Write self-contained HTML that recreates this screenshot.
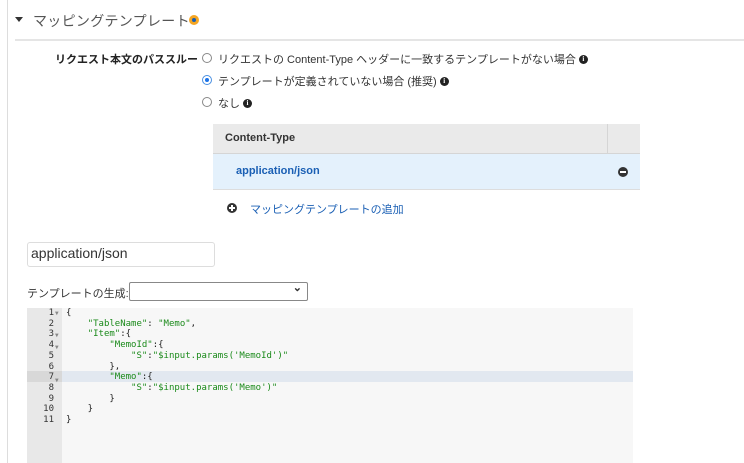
<!DOCTYPE html>
<html><head><meta charset="utf-8"><style>
*{margin:0;padding:0;box-sizing:border-box}
body{width:744px;height:463px;overflow:hidden;background:#fff;font-family:"Liberation Sans","Noto Sans CJK JP",sans-serif;color:#333;position:relative}
.a{position:absolute}
.info{display:inline-block;width:9px;height:9px;border-radius:50%;background:#222;color:#fff;font-size:7px;line-height:9px;text-align:center;font-weight:bold;vertical-align:middle;margin-left:3px;font-family:"Liberation Serif",serif;position:relative;top:-1px}
.radio{position:absolute;width:10px;height:10px;border:1px solid #888;border-radius:50%;background:#fff}
.t{font-size:11px;color:#333;white-space:nowrap}
.code{font-family:"DejaVu Sans Mono","Liberation Mono",monospace;font-size:9px;line-height:10.7px;white-space:pre}
.s{color:#1a8a1a}
.ar{font-size:6px;color:#888}
</style></head><body>
<div class="a" style="left:7px;top:0;width:1px;height:463px;background:#ddd"></div>
<div class="a" style="left:15px;top:17px;width:0;height:0;border-left:4px solid transparent;border-right:4px solid transparent;border-top:5px solid #333"></div>
<div class="a" style="left:33px;top:11px;font-size:14px;color:#555;white-space:nowrap;letter-spacing:0.3px">マッピングテンプレート</div>
<div class="a" style="left:189px;top:15px;width:10px;height:10px;border-radius:50%;background:#f5a623"><div style="margin:3px;width:4px;height:4px;border-radius:50%;background:#1a5fb4"></div></div>
<div class="a" style="left:15px;top:39px;width:729px;height:2px;background:#e5e5e5"></div>

<div class="a t" style="left:55px;top:51px;font-weight:bold;color:#222">リクエスト本文のパススルー</div>
<div class="radio" style="left:202px;top:53px"></div>
<div class="a t" style="left:218px;top:51px">リクエストの Content-Type ヘッダーに一致するテンプレートがない場合<span class="info">i</span></div>
<div class="radio" style="left:202px;top:75px;border-color:#4a90e2"><div style="margin:2px;width:4px;height:4px;border-radius:50%;background:#1a73e8"></div></div>
<div class="a t" style="left:218px;top:73px">テンプレートが定義されていない場合 (推奨)<span class="info">i</span></div>
<div class="radio" style="left:202px;top:97px"></div>
<div class="a t" style="left:218px;top:95px">なし<span class="info">i</span></div>

<div class="a" style="left:213px;top:124px;width:427px;height:30px;background:#eaeaea;border-bottom:1px solid #d5d5d5"></div>
<div class="a" style="left:607px;top:124px;width:1px;height:29px;background:#d5d5d5"></div>
<div class="a" style="left:225px;top:132px;font-size:11px;font-weight:bold;color:#333">Content-Type</div>
<div class="a" style="left:213px;top:154px;width:427px;height:36px;background:#e4f1fc;border-bottom:1px solid #ddd"></div>
<div class="a" style="left:236px;top:165px;font-size:11px;font-weight:bold;color:#1a5fb4">application/json</div>
<div class="a" style="left:618px;top:167px;width:10px;height:10px;border-radius:50%;background:#333"><div style="margin:4px 2px;width:6px;height:2px;background:#fff"></div></div>
<div class="a" style="left:227px;top:203px;width:10px;height:10px;border-radius:50%;background:#333"><div class="a" style="left:2px;top:4px;width:6px;height:2px;background:#fff"></div><div class="a" style="left:4px;top:2px;width:2px;height:6px;background:#fff"></div></div>
<div class="a" style="left:250px;top:201px;font-size:11px;color:#1a5fb4;white-space:nowrap">マッピングテンプレートの追加</div>

<div class="a" style="left:27px;top:242px;width:188px;height:25px;border:1px solid #ddd;border-radius:3px;font-size:14px;padding:2px 3px;color:#333">application/json</div>
<div class="a" style="left:27px;top:285px;font-size:11px;color:#333;white-space:nowrap">テンプレートの生成:</div>
<div class="a" style="left:129px;top:282px;width:179px;height:19px;border:1px solid #888;border-radius:2px"><span style="position:absolute;right:5px;top:-2px;font-size:11px;font-weight:bold">&#8964;</span></div>

<div class="a" style="left:27px;top:308px;width:606px;height:155px;background:#f7f7f7"></div>
<div class="a" style="left:27px;top:308px;width:35px;height:155px;background:#e8e8e8"></div>
<div class="a" style="left:27px;top:371px;width:606px;height:11px;background:#e2e8f0"></div>
<div class="a" style="left:27px;top:371px;width:35px;height:11px;background:#d8d8d8"></div>
<div class="a code" style="left:27px;top:308px;width:27px;text-align:right;color:#333">1
2
3
4
5
6
7
8
9
10
11</div>
<div class="a code" style="left:55px;top:308px;color:#888"><span class="ar">▼</span>

<span class="ar">▼</span>
<span class="ar">▼</span>


<span class="ar">▼</span></div>
<div class="a code" style="left:66px;top:308px;color:#222">{
    <span class="s">"TableName"</span>: <span class="s">"Memo"</span>,
    <span class="s">"Item"</span>:{
        <span class="s">"MemoId"</span>:{
            <span class="s">"S"</span>:<span class="s">"$input.params('MemoId')"</span>
        },
        <span class="s">"Memo"</span>:{
            <span class="s">"S"</span>:<span class="s">"$input.params('Memo')"</span>
        }
    }
}</div>
</body></html>
